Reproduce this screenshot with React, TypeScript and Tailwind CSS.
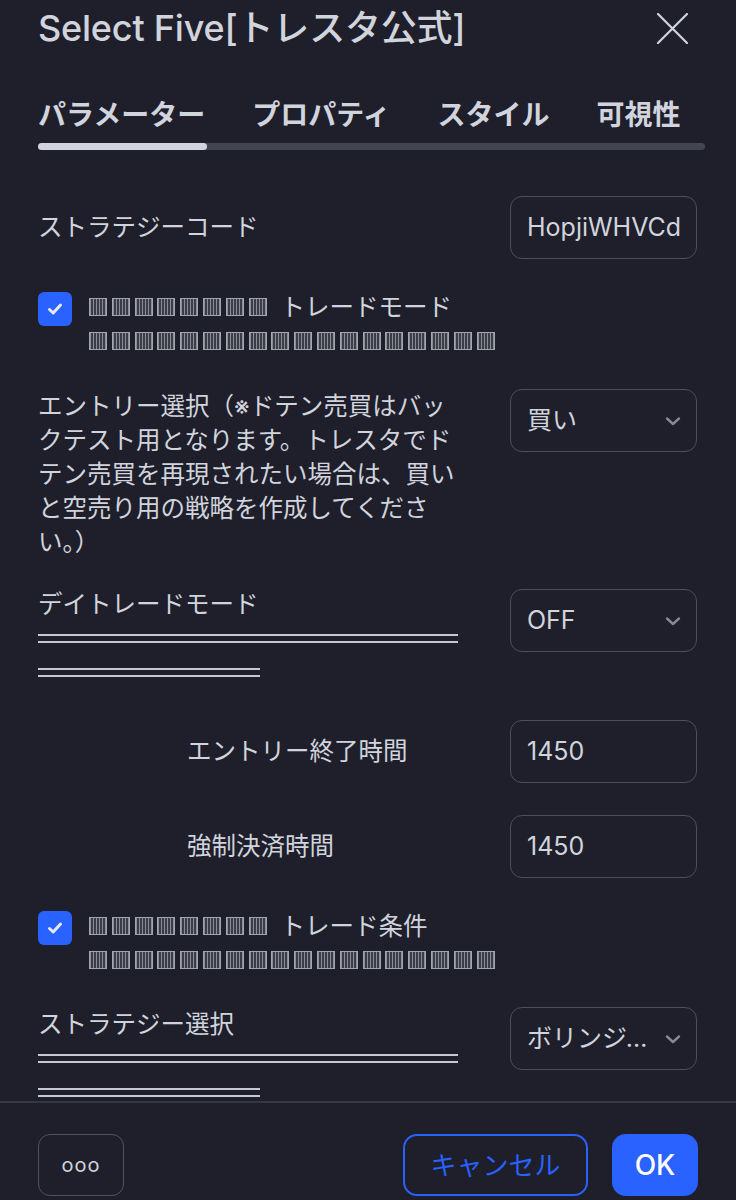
import type { ReactNode } from 'react'

const FONT = "font-['Inter','Noto_Sans_CJK_JP',sans-serif]"

function Tofu({ count }: { count: number }) {
  return (
    <span className="inline-flex gap-[4.8px] align-middle">
      {Array.from({ length: count }).map((_, i) => (
        <span
          key={i}
          className="inline-block h-[18px] w-[18px] border border-[#a3a6af] bg-[repeating-linear-gradient(90deg,#8a8d96_0_1px,#3a3d48_1px_3px)]"
        />
      ))}
    </span>
  )
}

function DoubleLine({ width }: { width: string }) {
  return (
    <div className="flex h-[34px] items-center">
      <div className={`h-[9px] border-y-[2.5px] border-[#c5c8d0] ${width}`} />
    </div>
  )
}

function Chevron() {
  return (
    <svg width="18" height="18" viewBox="0 0 18 18" fill="none" className="shrink-0">
      <path d="M3 6.5 9 12l6-5.5" stroke="#868993" strokeWidth="2.4" strokeLinecap="round" strokeLinejoin="round" />
    </svg>
  )
}

function Field({ children, select = false }: { children: ReactNode; select?: boolean }) {
  return (
    <div className="flex h-[63px] w-[187px] shrink-0 items-center justify-between rounded-[12px] border-[1.5px] border-[#4c4f5a] pl-[16px] pr-[14px] text-[25px]">
      <span className="truncate">{children}</span>
      {select && <Chevron />}
    </div>
  )
}

function CheckBox() {
  return (
    <div className="mt-[2px] flex h-[34px] w-[34px] shrink-0 items-center justify-center rounded-[6px] bg-[#2962ff]">
      <svg width="20" height="20" viewBox="0 0 20 20" fill="none">
        <path d="M4.5 10.5 8.2 14 15.5 6" stroke="#e6e9f0" strokeWidth="3" strokeLinecap="round" strokeLinejoin="round" />
      </svg>
    </div>
  )
}

function CheckRow({ text, boxes }: { text: string; boxes: number }) {
  return (
    <div className="flex gap-[17px] text-[24.5px] leading-[34px]">
      <CheckBox />
      <div>
        <div className="flex items-center gap-[14px]">
          <Tofu count={8} />
          <span>{text}</span>
        </div>
        <div className="flex h-[34px] items-center">
          <Tofu count={boxes} />
        </div>
      </div>
    </div>
  )
}

export default function App() {
  return (
    <div className={`flex h-[1200px] w-[736px] flex-col overflow-hidden bg-[#1e1f2b] text-[#d1d4dc] ${FONT}`}>
      <div className="flex h-[56px] shrink-0 items-center justify-between pl-[38px] pr-[48px]">
        <h1 className="text-[36px] font-medium leading-[44px] tracking-[-0.2px]">Select Five[トレスタ公式]</h1>
        <svg width="31" height="31" viewBox="0 0 31 31" fill="none">
          <path d="M1 1 30 30M30 1 1 30" stroke="#d1d4dc" strokeWidth="2.2" strokeLinecap="round" />
        </svg>
      </div>

      <div className="mt-[41px] flex gap-[47px] pl-[38px] text-[28px] font-semibold leading-[36px]">
        <span>パラメーター</span>
        <span>プロパティ</span>
        <span>スタイル</span>
        <span>可視性</span>
      </div>
      <div className="ml-[38px] mr-[31px] mt-[10px] h-[7px] shrink-0 rounded-full bg-[#434651]">
        <div className="h-full w-[169px] rounded-full bg-[#d1d4dc]" />
      </div>

      <div className="flex-1 overflow-hidden pl-[38px] pr-[39px] pt-[46px] text-[24.5px]">
        <div className="flex items-center justify-between">
          <span>ストラテジーコード</span>
          <Field>HopjiWHVCd</Field>
        </div>

        <div className="mt-[31px]">
          <CheckRow text="トレードモード" boxes={18} />
        </div>

        <div className="mt-[31px] flex items-start justify-between">
          <p className="w-[425px] leading-[34px]">
            エントリー選択（※ドテン売買はバックテスト用となります。トレスタでドテン売買を再現されたい場合は、買いと空売り用の戦略を作成してください。）
          </p>
          <Field select>買い</Field>
        </div>

        <div className="mt-[28px] flex items-start justify-between">
          <div className="leading-[34px]">
            <div>デイトレードモード</div>
            <DoubleLine width="w-[420px]" />
            <DoubleLine width="w-[222px]" />
          </div>
          <div className="mt-[2px]">
            <Field select>OFF</Field>
          </div>
        </div>

        <div className="mt-[31px] flex items-center justify-between pl-[149px]">
          <span>エントリー終了時間</span>
          <Field>1450</Field>
        </div>

        <div className="mt-[32px] flex items-center justify-between pl-[149px]">
          <span>強制決済時間</span>
          <Field>1450</Field>
        </div>

        <div className="mt-[31px]">
          <CheckRow text="トレード条件" boxes={18} />
        </div>

        <div className="mt-[30px] flex items-start justify-between">
          <div className="leading-[34px]">
            <div>ストラテジー選択</div>
            <DoubleLine width="w-[420px]" />
            <DoubleLine width="w-[222px]" />
          </div>
          <Field select>ボリンジャーバンド</Field>
        </div>
      </div>

      <div className="flex h-[99px] shrink-0 items-start justify-between border-t-2 border-[#363944] px-[38px] pt-[31px]">
        <button className="flex h-[62px] w-[86px] items-center justify-center rounded-[12px] border-[1.5px] border-[#50535e]">
          <span className="text-[20px] tracking-[1px]">ooo</span>
        </button>
        <div className="flex gap-[24px]">
          <button className="flex h-[62px] w-[185px] items-center justify-center rounded-[14px] border-2 border-[#2962ff] text-[26px] text-[#2962ff]">
            キャンセル
          </button>
          <button className="flex h-[62px] w-[86px] items-center justify-center rounded-[14px] bg-[#2962ff] text-[28px] font-medium text-white">
            OK
          </button>
        </div>
      </div>
    </div>
  )
}
